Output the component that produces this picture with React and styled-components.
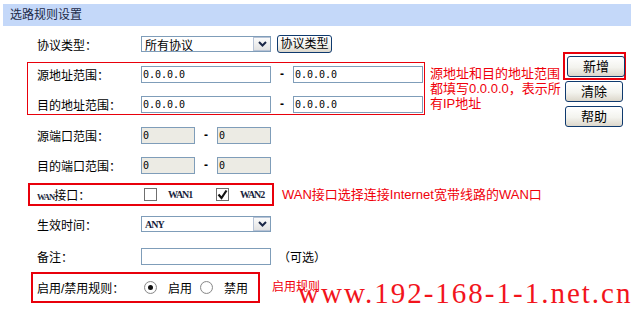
import React from "react";
import styled, { createGlobalStyle } from "styled-components";

const GlobalStyle = createGlobalStyle`
  body {
    margin: 0;
    background: #fff;
    font-family: "Liberation Sans", "Noto Sans CJK SC", sans-serif;
    font-size: 12px;
    color: #000;
  }
`;

const Page = styled.div`
  position: relative;
  width: 631px;
  height: 313px;
  padding-top: 4px;
  box-sizing: border-box;
  overflow: hidden;
`;

const TitleBar = styled.div`
  margin-left: 3px;
  height: 22px;
  line-height: 22px;
  padding-left: 7px;
  background: #c4d8f9;
  color: #1c2a48;
  font-size: 12px;
`;

const Body = styled.div`
  display: flex;
  align-items: flex-start;
`;

const FormColumn = styled.div`
  width: 563px;
  display: flex;
  flex-direction: column;
`;

const Row = styled.div`
  display: flex;
  align-items: center;
  height: ${(p) => p.$h || 20}px;
  margin-top: ${(p) => p.$mt || 0}px;
  padding-left: ${(p) => (p.$pl === undefined ? 37 : p.$pl)}px;
  white-space: nowrap;
`;

const Label = styled.div`
  width: 104px;
  flex-shrink: 0;
`;

const GroupLine = styled.div`
  display: flex;
  align-items: ${(p) => p.$align || "center"};
  margin-top: ${(p) => p.$mt}px;
  margin-left: ${(p) => p.$ml}px;
`;

const Group = styled.div`
  box-sizing: border-box;
  width: ${(p) => p.$w}px;
  border: ${(p) => p.$bw || 2}px solid #e8000b;
  display: flex;
  flex-direction: column;
  gap: ${(p) => p.$gap || 0}px;
  padding-top: ${(p) => p.$pt || 0}px;
`;

const Note = styled.div`
  margin-left: ${(p) => p.$ml}px;
  margin-top: ${(p) => p.$mt || 0}px;
  color: #f0000a;
  font-size: ${(p) => p.$fs || 13}px;
  line-height: 15px;
  white-space: nowrap;
`;

const TextBox = styled.input`
  box-sizing: border-box;
  width: ${(p) => p.$w || 130}px;
  height: 17px;
  margin: 0;
  padding: 0 0 0 1px;
  border: 1px solid #7f9db9;
  background: ${(p) => (p.$disabled ? "#ecebe4" : "#fff")};
  font-family: "DejaVu Sans Mono", monospace;
  font-size: 10px;
  color: #000;
  outline: none;
`;

const Dash = styled.span`
  width: 22px;
  text-align: center;
  font-size: 12px;
  font-weight: bold;
`;

const Optional = styled.span`
  margin-left: 7px;
`;

const SelectBox = styled.div`
  box-sizing: border-box;
  width: 130px;
  height: ${(p) => p.$h || 16}px;
  border: 1px solid #7f9db9;
  background: #fff;
  display: flex;
  align-items: center;
  justify-content: space-between;
  padding-left: 3px;
`;

const SelectArrow = styled.span`
  box-sizing: border-box;
  width: 17px;
  height: 100%;
  border: 1px solid #b7c3d6;
  border-right: none;
  background: linear-gradient(#fbfbfb, #e2e2e2);
  display: flex;
  align-items: center;
  justify-content: center;
`;

const MiniText = styled.span`
  font-family: "Liberation Serif", serif;
  font-weight: bold;
  font-size: ${(p) => p.$fs || 10}px;
  letter-spacing: ${(p) => p.$ls || -1}px;
  color: #1a1f3c;
`;

const PushButton = styled.button`
  box-sizing: border-box;
  width: ${(p) => p.$w || 58}px;
  height: ${(p) => p.$h || 21}px;
  margin: 0;
  padding: 0;
  border: 1px solid #0f3a6e;
  border-radius: 3px;
  background: linear-gradient(#ffffff, #f3f3ee 55%, #dcd7cb);
  font-family: "Liberation Sans", "Noto Sans CJK SC", sans-serif;
  font-size: ${(p) => p.$fs || 13}px;
  color: #000;
  line-height: 1;
`;

const InlineButton = styled(PushButton)`
  margin-left: 6px;
`;

const Option = styled.span`
  display: flex;
  align-items: center;
  width: ${(p) => (p.$w ? `${p.$w}px` : "auto")};
`;

const Check = styled.span`
  box-sizing: border-box;
  width: 13px;
  height: 13px;
  margin-left: ${(p) => p.$ml || 0}px;
  margin-right: 11px;
  border: 1px solid #6f6f6f;
  background: #fff;
  display: flex;
  align-items: center;
  justify-content: center;
`;

const Radio = styled.span`
  box-sizing: border-box;
  width: 13px;
  height: 13px;
  margin-left: ${(p) => p.$ml || 0}px;
  margin-right: 11px;
  border-radius: 50%;
  border: 1px solid #8a8a8a;
  background: radial-gradient(circle, #fff 55%, #e4e4e4);
  display: flex;
  align-items: center;
  justify-content: center;

  &::after {
    content: "";
    width: 5px;
    height: 5px;
    border-radius: 50%;
    background: ${(p) => (p.$on ? "#111" : "transparent")};
  }
`;

const SideColumn = styled.div`
  margin-top: 26px;
  display: flex;
  flex-direction: column;
  align-items: flex-start;
`;

const SideHighlight = styled.div`
  box-sizing: border-box;
  width: 63px;
  height: 28px;
  border: 2px solid #e8000b;
  padding: 2px 0 0 0;
`;

const SideButton = styled(PushButton)`
  margin-left: 2px;
  margin-top: ${(p) => p.$mt || 0}px;
`;

const Watermark = styled.div`
  position: absolute;
  left: 298px;
  top: 279px;
  font-family: "Liberation Serif", serif;
  font-size: 29px;
  line-height: 1;
  letter-spacing: 2px;
  color: #f2141c;
  white-space: nowrap;
  pointer-events: none;
`;

const Chevron = () => (
  <svg width="9" height="6" viewBox="0 0 9 6">
    <polyline points="1,1 4.5,4.5 8,1" fill="none" stroke="#1b2747" strokeWidth="2" />
  </svg>
);

const Tick = () => (
  <svg width="11" height="11" viewBox="0 0 11 11">
    <polyline points="1.5,5.5 4.5,9 9.5,1.5" fill="none" stroke="#111" strokeWidth="2.2" />
  </svg>
);

export default function App() {
  return (
    <>
      <GlobalStyle />
      <Page>
        <TitleBar>选路规则设置</TitleBar>
        <Body>
          <FormColumn>
            <Row $h={22} $mt={7}>
              <Label>协议类型：</Label>
              <SelectBox>
                <span>所有协议</span>
                <SelectArrow>
                  <Chevron />
                </SelectArrow>
              </SelectBox>
              <InlineButton $w={55} $h={18} $fs={12}>
                协议类型
              </InlineButton>
            </Row>

            <GroupLine $mt={7} $ml={27} $align="flex-start">
              <Group $w={398} $bw={1} $pt={1} $gap={10}>
                <Row $pl={9}>
                  <Label>源地址范围：</Label>
                  <TextBox readOnly defaultValue="0.0.0.0" />
                  <Dash>-</Dash>
                  <TextBox readOnly defaultValue="0.0.0.0" />
                </Row>
                <Row $pl={9}>
                  <Label>目的地址范围：</Label>
                  <TextBox readOnly defaultValue="0.0.0.0" />
                  <Dash>-</Dash>
                  <TextBox readOnly defaultValue="0.0.0.0" />
                </Row>
              </Group>
              <Note $ml={5} $mt={4}>
                源地址和目的地址范围
                <br />
                都填写0.0.0.0，表示所
                <br />
                有IP地址
              </Note>
            </GroupLine>

            <Row $mt={10}>
              <Label>源端口范围：</Label>
              <TextBox $w={54} $disabled readOnly defaultValue="0" />
              <Dash>-</Dash>
              <TextBox $w={54} $disabled readOnly defaultValue="0" />
            </Row>
            <Row $mt={10}>
              <Label>目的端口范围：</Label>
              <TextBox $w={54} $disabled readOnly defaultValue="0" />
              <Dash>-</Dash>
              <TextBox $w={54} $disabled readOnly defaultValue="0" />
            </Row>

            <GroupLine $mt={8} $ml={28}>
              <Group $w={246}>
                <Row $h={19} $pl={7}>
                  <Label>
                    <MiniText $fs={8.5} $ls={-0.9}>WAN</MiniText>接口：
                  </Label>
                  <Option $w={75}>
                    <Check $ml={3} />
                    <MiniText>WAN1</MiniText>
                  </Option>
                  <Option>
                    <Check>
                      <Tick />
                    </Check>
                    <MiniText>WAN2</MiniText>
                  </Option>
                </Row>
              </Group>
              <Note $ml={8}>WAN接口选择连接Internet宽带线路的WAN口</Note>
            </GroupLine>

            <Row $mt={8}>
              <Label>生效时间：</Label>
              <SelectBox>
                <MiniText>ANY</MiniText>
                <SelectArrow>
                  <Chevron />
                </SelectArrow>
              </SelectBox>
            </Row>
            <Row $mt={12}>
              <Label>备注：</Label>
              <TextBox readOnly defaultValue="" />
              <Optional>（可选）</Optional>
            </Row>

            <GroupLine $mt={6} $ml={31}>
              <Group $w={229}>
                <Row $h={27} $pl={4}>
                  <Label>启用/禁用规则：</Label>
                  <Option $w={59}>
                    <Radio $ml={3} $on />
                    启用
                  </Option>
                  <Option>
                    <Radio />
                    禁用
                  </Option>
                </Row>
              </Group>
              <Note $ml={12} $fs={12}>
                启用规则
              </Note>
            </GroupLine>
          </FormColumn>

          <SideColumn>
            <SideHighlight>
              <SideButton>新增</SideButton>
            </SideHighlight>
            <SideButton $mt={1}>清除</SideButton>
            <SideButton $mt={4}>帮助</SideButton>
          </SideColumn>
        </Body>
        <Watermark>www.192-168-1-1.net.cn</Watermark>
      </Page>
    </>
  );
}
